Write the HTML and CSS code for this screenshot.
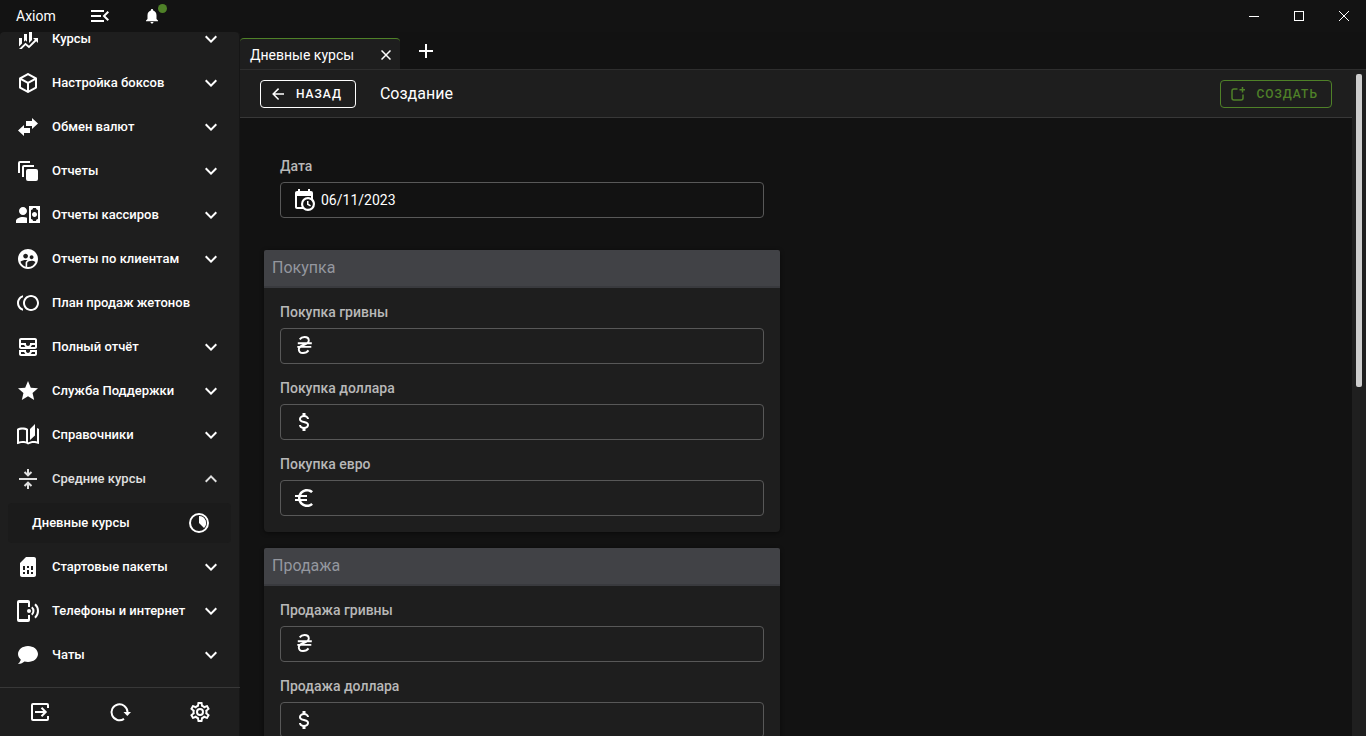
FILE: index.html
```html
<!DOCTYPE html>
<html lang="ru">
<head>
<meta charset="utf-8">
<meta name="viewport" content="width=device-width, initial-scale=1">
<title>Axiom</title>
<link rel="stylesheet" href="styles.css">
</head>
<body>
<svg class="sprite" aria-hidden="true">
  <symbol id="chevron-down" viewBox="0 0 24 24"><path d="M7.41 8.58 12 13.17l4.59-4.59L18 10l-6 6-6-6z"/></symbol>
  <symbol id="chevron-up" viewBox="0 0 24 24"><path d="M7.41 15.41 12 10.83l4.59 4.58L18 14l-6-6-6 6z"/></symbol>
  <symbol id="hryvnia" viewBox="0 0 24 24"><path d="M7.700 5.400C8.900 3.700 10.600 3 12.500 3c2.700 0 4.300 1.300 4.300 3.500 0 5-10 4-10 8.700 0 2.400 1.700 3.800 4.200 3.800 2.200 0 4.300-.8 5.500-2.600M5.300 12.900h14M5.800 9.200h14" fill="none" stroke="currentColor" stroke-width="1.900"/></symbol>
  <symbol id="dollar" viewBox="0 0 24 24"><path d="M7 15h2c0 1.080 1.370 2 3 2s3-.92 3-2c0-1.100-1.040-1.500-3.240-2.030C9.640 12.440 7 11.780 7 9c0-1.790 1.470-3.310 3.500-3.820V3h3v2.180C15.530 5.690 17 7.210 17 9h-2c0-1.080-1.370-2-3-2s-3 .92-3 2c0 1.100 1.040 1.500 3.240 2.030C14.360 11.560 17 12.220 17 15c0 1.790-1.470 3.310-3.500 3.820V21h-3v-2.180C8.470 18.310 7 16.790 7 15z"/></symbol>
  <symbol id="euro" viewBox="0 0 24 24"><path d="M15 18.500c-2.510 0-4.680-1.420-5.760-3.500H15v-2H8.580c-.05-.33-.08-.66-.08-1s.03-.67.08-1H15V9H9.240C10.320 6.920 12.500 5.500 15 5.500c1.610 0 3.090.59 4.230 1.570L21 5.300C19.410 3.870 17.300 3 15 3c-3.920 0-7.240 2.510-8.480 6H3v2h3.060c-.04.33-.06.66-.06 1s.02.67.06 1H3v2h3.520c1.240 3.490 4.560 6 8.480 6 2.310 0 4.410-.87 6-2.300l-1.780-1.770c-1.130.98-2.600 1.570-4.220 1.570z"/></symbol>
</svg>

<div class="app">
  <header class="titlebar">
    <span class="brand">Axiom</span>
    <button class="icon-btn menu-toggle" type="button" aria-label="Свернуть меню">
      <svg class="icon" viewBox="0 0 24 24"><path d="M3 18h13v-2H3v2zm0-5h10v-2H3v2zm0-7v2h13V6H3zm18 9.590L17.420 12 21 8.410 19.590 7l-5 5 5 5L21 15.590z"/></svg>
    </button>
    <button class="icon-btn bell" type="button" aria-label="Уведомления">
      <svg class="icon icon-sm" viewBox="0 0 24 24"><path d="M12 22c1.100 0 2-.9 2-2h-4c0 1.100.9 2 2 2zm6-6v-5c0-3.070-1.630-5.640-4.500-6.320V4c0-.83-.67-1.500-1.500-1.500s-1.500.67-1.500 1.500v.68C7.640 5.360 6 7.920 6 11v5l-2 2v1h16v-1z"/></svg>
      <span class="bell-dot"></span>
    </button>
    <div class="window-controls">
      <button class="icon-btn window-btn" type="button" aria-label="Свернуть"><svg class="win-icon" viewBox="0 0 10 10"><path d="M0 5h10v1H0z"/></svg></button>
      <button class="icon-btn window-btn" type="button" aria-label="Развернуть"><svg class="win-icon" viewBox="0 0 10 10"><path d="M0 0h10v10H0zM1 1v8h8V1z" fill-rule="evenodd"/></svg></button>
      <button class="icon-btn window-btn" type="button" aria-label="Закрыть окно"><svg class="win-icon" viewBox="0 0 10 10"><path d="M0 0l10 10M10 0 0 10" stroke="currentColor"/></svg></button>
    </div>
  </header>

  <div class="workspace">
    <aside class="sidebar">
      <nav class="nav" aria-label="Главное меню">
        <button class="nav-item" type="button">
          <svg class="icon" viewBox="0 0 24 24"><path d="M6 16.500 3 19.440V11h3m5 3.660-1.570-1.340L8 14.640V7h3m5 6-3 3V3h3m2.810 9.810L17 11h5v5l-1.790-1.790L13 21.360l-3.470-3.020L5.750 22H3l6.470-6.340L13 18.640"/></svg>
          <span class="nav-label">Курсы</span><svg class="icon"><use href="#chevron-down"/></svg>
        </button>
        <button class="nav-item" type="button">
          <svg class="icon" viewBox="0 0 24 24"><path d="M21,16.5C21,16.88 20.79,17.21 20.47,17.38L12.57,21.82C12.41,21.94 12.21,22 12,22C11.79,22 11.59,21.94 11.43,21.82L3.53,17.38C3.21,17.21 3,16.88 3,16.5V7.5C3,7.12 3.21,6.79 3.53,6.62L11.43,2.18C11.59,2.06 11.79,2 12,2C12.21,2 12.41,2.06 12.57,2.18L20.47,6.62C20.79,6.79 21,7.12 21,7.5V16.5M12,4.15L6.04,7.5L12,10.85L17.96,7.5L12,4.15M5,15.91L11,19.29V12.58L5,9.21V15.91M19,15.91V9.21L13,12.58V19.29L19,15.91Z"/></svg>
          <span class="nav-label">Настройка боксов</span><svg class="icon"><use href="#chevron-down"/></svg>
        </button>
        <button class="nav-item" type="button">
          <svg class="icon" viewBox="0 0 24 24"><path d="M8,10V13H14V18H8V21L2,15.500L8,10M22,8.500L16,3V6H10V11H16V14L22,8.500Z"/></svg>
          <span class="nav-label">Обмен валют</span><svg class="icon"><use href="#chevron-down"/></svg>
        </button>
        <button class="nav-item" type="button">
          <svg class="icon" viewBox="0 0 24 24"><path d="M4 2a2 2 0 0 0-2 2v10h2V4h10V2zM8 6a2 2 0 0 0-2 2v10h2V8h10V6zM12 10h8a2 2 0 0 1 2 2v8a2 2 0 0 1-2 2h-8a2 2 0 0 1-2-2v-8a2 2 0 0 1 2-2z"/></svg>
          <span class="nav-label">Отчеты</span><svg class="icon"><use href="#chevron-down"/></svg>
        </button>
        <button class="nav-item" type="button">
          <svg class="icon" viewBox="0 0 24 24"><path d="M11 8C11 10.21 9.21 12 7 12C4.79 12 3 10.21 3 8C3 5.79 4.79 4 7 4C9.21 4 11 5.79 11 8M11 14.72V20H0V18C0 15.79 3.13 14 7 14C8.5 14 9.87 14.27 11 14.72M24 20H13V3H24V20M16 11.5C16 10.12 17.12 9 18.5 9C19.88 9 21 10.12 21 11.5C21 12.88 19.88 14 18.5 14C17.12 14 16 12.88 16 11.5M22 7C20.9 7 20 6.11 20 5H17C17 6.11 16.1 7 15 7V16C16.11 16 17 16.9 17 18H20C20 16.9 20.9 16 22 16V7Z"/></svg>
          <span class="nav-label">Отчеты кассиров</span><svg class="icon"><use href="#chevron-down"/></svg>
        </button>
        <button class="nav-item" type="button">
          <svg class="icon" viewBox="0 0 24 24"><path d="M11.99 2c-5.52 0-10 4.48-10 10s4.48 10 10 10 10-4.48 10-10-4.48-10-10-10zm3.61 6.34c1.07 0 1.93.86 1.93 1.93 0 1.07-.86 1.93-1.93 1.93-1.07 0-1.93-.86-1.93-1.93-.01-1.07.86-1.93 1.93-1.93zm-6-1.58c1.3 0 2.36 1.06 2.36 2.36 0 1.3-1.06 2.36-2.36 2.36s-2.36-1.06-2.36-2.36c0-1.31 1.05-2.36 2.36-2.36zm0 9.13v3.75c-2.4-.75-4.3-2.6-5.14-4.96 1.05-1.12 3.67-1.69 5.14-1.69.53 0 1.2.08 1.9.22-1.64.87-1.9 2.02-1.9 2.68zM11.99 20c-.27 0-.53-.01-.79-.04v-4.07c0-1.42 2.94-2.13 4.4-2.13 1.07 0 2.92.39 3.84 1.15-1.17 2.97-4.06 5.09-7.45 5.09z"/></svg>
          <span class="nav-label">Отчеты по клиентам</span><svg class="icon"><use href="#chevron-down"/></svg>
        </button>
        <a class="nav-item" href="#plan">
          <svg class="icon" viewBox="0 0 24 24"><path d="M15 4c-4.420 0-8 3.580-8 8s3.580 8 8 8 8-3.580 8-8-3.580-8-8-8zm0 14c-3.310 0-6-2.690-6-6s2.690-6 6-6 6 2.690 6 6-2.690 6-6 6zM3 12c0-2.610 1.670-4.830 4-5.650V4.260C3.550 5.150 1 8.270 1 12s2.550 6.850 6 7.740v-2.090c-2.330-.82-4-3.040-4-5.650z"/></svg>
          <span class="nav-label">План продаж жетонов</span>
        </a>
        <button class="nav-item" type="button">
          <svg class="icon" viewBox="0 0 24 24"><path d="M19 3H5c-1.1 0-2 .9-2 2v7c0 1.1.9 2 2 2h14c1.1 0 2-.9 2-2V5c0-1.1-.9-2-2-2zM5 10h3.13c.21.78.67 1.47 1.27 2H5v-2zm14 2h-4.4c.6-.53 1.06-1.22 1.27-2H19v2zm0-4h-5v1c0 1.07-.93 2-2 2s-2-.93-2-2V8H5V5h14v3zm-5 7v1c0 .47-.19.9-.48 1.25-.37.45-.92.75-1.52.75s-1.15-.3-1.52-.75c-.29-.35-.48-.78-.48-1.25v-1H3v4c0 1.1.9 2 2 2h14c1.1 0 2-.9 2-2v-4h-7zm-9 2h3.13c.02.09.06.17.09.25.24.68.65 1.28 1.18 1.75H5v-2zm14 2h-4.4c.54-.47.95-1.07 1.18-1.75.03-.08.07-.16.09-.25H19v2z"/></svg>
          <span class="nav-label">Полный отчёт</span><svg class="icon"><use href="#chevron-down"/></svg>
        </button>
        <button class="nav-item" type="button">
          <svg class="icon" viewBox="0 0 24 24"><path d="M12 17.270 18.180 21l-1.640-7.030L22 9.240l-7.190-.61L12 2 9.190 8.630 2 9.240l5.450 4.730L5.820 21z"/></svg>
          <span class="nav-label">Служба Поддержки</span><svg class="icon"><use href="#chevron-down"/></svg>
        </button>
        <button class="nav-item" type="button">
          <svg class="icon" viewBox="0 0 24 24"><path d="M19 1L14 6V17L19 12.5V1M21 5V18.5C19.9 18.15 18.7 18 17.5 18C15.8 18 13.35 18.65 12 19.5V6C10.55 4.9 8.45 4.5 6.5 4.5C4.55 4.5 2.45 4.9 1 6V20.65C1 20.9 1.25 21.15 1.5 21.15C1.6 21.15 1.65 21.1 1.75 21.1C3.1 20.45 5.05 20 6.5 20C8.45 20 10.55 20.4 12 21.5C13.35 20.65 15.8 20 17.5 20C19.15 20 20.85 20.3 22.25 21.05C22.35 21.1 22.4 21.1 22.5 21.1C22.75 21.1 23 20.85 23 20.6V6C22.4 5.55 21.75 5.25 21 5M10 18.41C8.75 18.09 7.5 18 6.5 18C5.44 18 4.18 18.19 3 18.5V7.13C3.91 6.73 5.14 6.5 6.5 6.5C7.86 6.5 9.09 6.73 10 7.13V18.41Z"/></svg>
          <span class="nav-label">Справочники</span><svg class="icon"><use href="#chevron-down"/></svg>
        </button>
        <button class="nav-item nav-item-open" type="button" aria-expanded="true">
          <svg class="icon" viewBox="0 0 24 24"><path d="M3 12h18M12 2v6M8.500 5 12 8.300 15.500 5M12 22v-6M8.500 19l3.500-3.300 3.500 3.300" fill="none" stroke="currentColor" stroke-width="2"/></svg>
          <span class="nav-label">Средние курсы</span><svg class="icon"><use href="#chevron-up"/></svg>
        </button>
        <a class="nav-item nav-sub" href="#daily" aria-current="page">
          <span class="nav-label">Дневные курсы</span>
          <svg class="icon" viewBox="0 0 24 24"><circle cx="12" cy="12" r="9" fill="none" stroke="currentColor" stroke-width="2"/><path d="M12 5v7l5 5a7 7 0 0 0-5-12z"/></svg>
        </a>
        <button class="nav-item" type="button">
          <svg class="icon" viewBox="0 0 24 24"><path d="M19.990 4c0-1.100-.89-2-1.990-2h-8L4 8v12c0 1.100.9 2 2 2h12.010c1.100 0 1.990-.9 1.990-2l-.01-16zM9 19H7v-2h2v2zm8 0h-2v-2h2v2zm-8-4H7v-4h2v4zm4 4h-2v-4h2v4zm0-6h-2v-2h2v2zm4 2h-2v-4h2v4z"/></svg>
          <span class="nav-label">Стартовые пакеты</span><svg class="icon"><use href="#chevron-down"/></svg>
        </button>
        <button class="nav-item" type="button">
          <svg class="icon" viewBox="0 0 24 24"><path d="M3 1h9a2 2 0 0 1 2 2v5h-2V4H3v16h9v-4h2v5a2 2 0 0 1-2 2H3a2 2 0 0 1-2-2V3a2 2 0 0 1 2-2z"/><circle cx="13" cy="12" r="2"/><path d="M15.800 8.300a5 5 0 0 1 0 7.400M19 5.300a9 9 0 0 1 0 13.400" fill="none" stroke="currentColor" stroke-width="2"/></svg>
          <span class="nav-label">Телефоны и интернет</span><svg class="icon"><use href="#chevron-down"/></svg>
        </button>
        <button class="nav-item" type="button">
          <svg class="icon" viewBox="0 0 24 24"><path d="M12,3C17.5,3 22,6.58 22,11C22,15.42 17.5,19 12,19C10.76,19 9.57,18.82 8.47,18.5C5.55,21 2,21 2,21C4.33,18.67 4.7,17.1 4.75,16.5C3.05,15.07 2,13.13 2,11C2,6.58 6.5,3 12,3Z"/></svg>
          <span class="nav-label">Чаты</span><svg class="icon"><use href="#chevron-down"/></svg>
        </button>
      </nav>
      <div class="sidebar-footer">
        <button class="icon-btn" type="button" aria-label="Выйти"><svg class="icon" viewBox="0 0 24 24"><path d="M20 8V5a1 1 0 0 0-1-1H5a1 1 0 0 0-1 1v14a1 1 0 0 0 1 1h14a1 1 0 0 0 1-1v-3M7 12h10.500M13.500 7.800 17.700 12l-4.200 4.200" fill="none" stroke="currentColor" stroke-width="2"/></svg></button>
        <button class="icon-btn" type="button" aria-label="Обновить"><svg class="icon" viewBox="0 0 24 24"><path d="M16 18.900A8 8 0 1 1 19.500 12" fill="none" stroke="currentColor" stroke-width="2"/><path d="M15.500 12h7.500l-3.700 4z"/></svg></button>
        <button class="icon-btn" type="button" aria-label="Настройки"><svg class="icon" viewBox="0 0 24 24"><path d="M12,8A4,4 0 0,1 16,12A4,4 0 0,1 12,16A4,4 0 0,1 8,12A4,4 0 0,1 12,8M12,10A2,2 0 0,0 10,12A2,2 0 0,0 12,14A2,2 0 0,0 14,12A2,2 0 0,0 12,10M10,22C9.75,22 9.54,21.82 9.5,21.58L9.13,18.93C8.5,18.68 7.96,18.34 7.44,17.94L4.95,18.95C4.73,19.03 4.46,18.95 4.34,18.73L2.34,15.27C2.21,15.05 2.27,14.78 2.46,14.63L4.57,12.97L4.5,12L4.57,11L2.46,9.37C2.27,9.22 2.21,8.95 2.34,8.73L4.34,5.27C4.46,5.05 4.73,4.96 4.95,5.05L7.44,6.05C7.96,5.66 8.5,5.32 9.13,5.07L9.5,2.42C9.54,2.18 9.75,2 10,2H14C14.25,2 14.46,2.18 14.5,2.42L14.87,5.07C15.5,5.32 16.04,5.66 16.56,6.05L19.05,5.05C19.27,4.96 19.54,5.05 19.66,5.27L21.66,8.73C21.79,8.95 21.73,9.22 21.54,9.37L19.43,11L19.5,12L19.43,13L21.54,14.63C21.73,14.78 21.79,15.05 21.66,15.27L19.66,18.73C19.54,18.95 19.27,19.04 19.05,18.95L16.56,17.95C16.04,18.34 15.5,18.68 14.87,18.93L14.5,21.58C14.46,21.82 14.25,22 14,22H10M11.25,4L10.88,6.61C9.68,6.86 8.62,7.5 7.85,8.39L5.44,7.35L4.69,8.65L6.8,10.2C6.4,11.37 6.4,12.64 6.8,13.8L4.68,15.36L5.43,16.66L7.86,15.62C8.63,16.5 9.68,17.14 10.87,17.38L11.24,20H12.76L13.13,17.39C14.32,17.14 15.37,16.5 16.14,15.62L18.57,16.66L19.32,15.36L17.2,13.81C17.6,12.64 17.6,11.37 17.2,10.2L19.31,8.65L18.56,7.35L16.15,8.39C15.38,7.5 14.32,6.86 13.12,6.62L12.75,4H11.25Z"/></svg></button>
      </div>
    </aside>

    <main class="main">
      <div class="tabs">
        <div class="tab">
          <a class="tab-title" href="#daily">Дневные курсы</a>
          <button class="icon-btn tab-close" type="button" aria-label="Закрыть вкладку"><svg class="win-icon" viewBox="0 0 10 10"><path d="M.5.5l9 9M9.500.5l-9 9" stroke="currentColor" stroke-width="1.500"/></svg></button>
        </div>
        <button class="icon-btn tab-add" type="button" aria-label="Новая вкладка"><svg class="icon-add" viewBox="0 0 14 14"><path d="M6 0h2v6h6v2H8v6H6V8H0V6h6z"/></svg></button>
      </div>
      <div class="view">
        <div class="page">
          <div class="toolbar">
            <button class="btn" type="button"><svg class="icon icon-sm" viewBox="0 0 24 24"><path d="M20 11v2H8l5.500 5.500-1.420 1.420L4.160 12l7.920-7.920L13.500 5.500 8 11z"/></svg>НАЗАД</button>
            <h1 class="page-title">Создание</h1>
            <button class="btn btn-create" type="button"><svg class="icon icon-sm" viewBox="0 0 18 18"><path d="M8.500 4H5a2 2 0 0 0-2 2v7a2 2 0 0 0 2 2h7a2 2 0 0 0 2-2V9.500M13.500 2v5.500M10.500 4.750h5.500" fill="none" stroke="currentColor" stroke-width="1.500"/></svg>СОЗДАТЬ</button>
          </div>
          <form class="form">
            <div class="field field-date">
              <label for="date">Дата</label>
              <div class="control"><svg class="icon" viewBox="0 0 24 24"><path d="M15,13H16.5V15.82L18.94,17.23L18.19,18.53L15,16.69V13M19,8H5V19H9.67C9.24,18.09 9,17.07 9,16A7,7 0 0,1 16,9C17.07,9 18.09,9.24 19,9.67V8M5,21C3.89,21 3,20.1 3,19V5C3,3.89 3.89,3 5,3H6V1H8V3H16V1H18V3H19A2,2 0 0,1 21,5V11.1C22.24,12.36 23,14.09 23,16A7,7 0 0,1 16,23C14.09,23 12.36,22.24 11.1,21H5M16,11.15A4.85,4.85 0 0,0 11.15,16C11.15,18.68 13.32,20.85 16,20.85A4.85,4.85 0 0,0 20.85,16C20.85,13.32 18.68,11.15 16,11.15Z"/></svg><input id="date" type="text" value="06/11/2023"></div>
            </div>
            <section class="card">
              <h2 class="card-title">Покупка</h2>
              <div class="card-body">
                <div class="field"><label for="buy-uah">Покупка гривны</label><div class="control"><svg class="icon"><use href="#hryvnia"/></svg><input id="buy-uah" type="text"></div></div>
                <div class="field"><label for="buy-usd">Покупка доллара</label><div class="control"><svg class="icon"><use href="#dollar"/></svg><input id="buy-usd" type="text"></div></div>
                <div class="field"><label for="buy-eur">Покупка евро</label><div class="control"><svg class="icon"><use href="#euro"/></svg><input id="buy-eur" type="text"></div></div>
              </div>
            </section>
            <section class="card">
              <h2 class="card-title">Продажа</h2>
              <div class="card-body">
                <div class="field"><label for="sell-uah">Продажа гривны</label><div class="control"><svg class="icon"><use href="#hryvnia"/></svg><input id="sell-uah" type="text"></div></div>
                <div class="field"><label for="sell-usd">Продажа доллара</label><div class="control"><svg class="icon"><use href="#dollar"/></svg><input id="sell-usd" type="text"></div></div>
              </div>
            </section>
          </form>
        </div>
        <div class="scrollbar" aria-hidden="true"><div class="scrollbar-thumb"></div></div>
      </div>
    </main>
  </div>
</div>
</body>
</html>
```

FILE: styles.css
```css
* {
  box-sizing: border-box;
}

body {
  margin: 0;
  background: #121212;
  color: #fff;
  font-family: Roboto, "Liberation Sans", sans-serif;
  font-size: 14px;
}

button,
input {
  font: inherit;
  color: inherit;
}

a {
  color: inherit;
  text-decoration: none;
}

.sprite {
  display: none;
}

.icon {
  flex: none;
  width: 24px;
  height: 24px;
  fill: currentColor;
}

.icon-sm {
  width: 18px;
  height: 18px;
}

.win-icon {
  width: 10px;
  height: 10px;
  fill: currentColor;
}

.icon-btn {
  display: flex;
  align-items: center;
  justify-content: center;
  padding: 0;
  border: 0;
  background: none;
}

.app {
  display: flex;
  flex-direction: column;
  height: 100vh;
  overflow: hidden;
}

/* Title bar */

.titlebar {
  display: flex;
  flex: none;
  height: 32px;
  padding-left: 16px;
  background: #131313;
}

.brand {
  line-height: 32px;
}

.menu-toggle {
  width: 40px;
  margin-left: 24px;
}

.bell {
  position: relative;
  width: 32px;
  margin-left: 16px;
}

.bell-dot {
  position: absolute;
  top: 4px;
  right: 1px;
  width: 9px;
  height: 9px;
  border-radius: 50%;
  background: #4f8128;
}

.window-controls {
  display: flex;
  margin-left: auto;
}

.window-btn {
  width: 45px;
}

.workspace {
  display: flex;
  flex: 1;
  min-height: 0;
}

/* Sidebar */

.sidebar {
  display: flex;
  flex: none;
  flex-direction: column;
  width: 240px;
  border-radius: 4px 4px 0 0;
  background: #1e1e1e;
  box-shadow: inset -1px 0 #161616;
}

.nav {
  display: flex;
  flex: 1;
  flex-direction: column;
  justify-content: flex-end;
  gap: 4px;
  min-height: 0;
  padding: 0 9px 12px 8px;
  overflow: hidden;
}

.nav-item {
  display: flex;
  flex: none;
  align-items: center;
  gap: 12px;
  height: 40px;
  padding: 0 8px;
  border: 0;
  border-radius: 4px;
  background: none;
  font-size: 13px;
  font-weight: 500;
  text-align: left;
  white-space: nowrap;
}

.nav-label {
  flex: 1;
  line-height: 16px;
}

.nav-item-open {
  color: #e0e0e0;
}

.nav-sub {
  padding: 0 20px 0 24px;
  background: #1b1b1b;
}

.sidebar-footer {
  display: grid;
  flex: none;
  grid-template-columns: repeat(3, 1fr);
  height: 49px;
  border-top: 1px solid #383838;
}

/* Tabs */

.main {
  display: flex;
  flex: 1;
  flex-direction: column;
  min-width: 0;
}

.tabs {
  display: flex;
  flex: none;
  height: 38px;
  padding-top: 6px;
  border-bottom: 1px solid #2e2e2e;
}

.tab {
  display: flex;
  align-items: center;
  justify-content: space-between;
  width: 160px;
  padding: 2px 4px 0 10px;
  border-top: 1px solid #4f8128;
  border-radius: 4px 4px 0 0;
  background: #1e1e1e;
}

.tab-close {
  width: 20px;
  height: 20px;
}

.tab-add {
  width: 52px;
  padding-bottom: 6px;
}

.icon-add {
  width: 14px;
  height: 14px;
  fill: currentColor;
}

.view {
  display: flex;
  flex: 1;
  min-height: 0;
}

.page {
  flex: 1;
  min-width: 0;
  overflow: hidden;
}

.toolbar {
  display: flex;
  align-items: center;
  height: 48px;
  padding: 0 20px;
  border-bottom: 1px solid #383838;
  background: #1e1e1e;
}

.page-title {
  margin: 0 0 0 24px;
  font-size: 16px;
  font-weight: 400;
}

.btn {
  display: flex;
  align-items: center;
  gap: 9px;
  height: 28px;
  padding: 0 13px 0 8px;
  border: 1px solid #fff;
  border-radius: 4px;
  background: none;
  font-size: 12px;
  font-weight: 500;
  letter-spacing: 1px;
}

.btn-create {
  margin-left: auto;
  border-color: #4f8128;
  color: #4f8128;
}

/* Form */

.form {
  display: flex;
  flex-direction: column;
  gap: 16px;
  max-width: 564px;
  padding: 40px 24px;
}

.field {
  display: flex;
  flex-direction: column;
  gap: 8px;
}

.field-date {
  padding: 0 16px 16px;
}

.field label {
  color: #b8b8b8;
  font-weight: 500;
  line-height: 16px;
}

.control {
  display: flex;
  align-items: center;
  gap: 5px;
  height: 36px;
  padding: 0 11px;
  border: 1px solid #585858;
  border-radius: 4px;
}

.control input {
  flex: 1;
  min-width: 0;
  padding: 0;
  border: 0;
  outline: 0;
  background: none;
}

.card {
  border-radius: 4px;
  background: #1e1e1e;
  box-shadow: 0 1px 4px rgba(0, 0, 0, 0.5);
}

.card-title {
  height: 38px;
  margin: 0;
  padding: 0 8px;
  border-bottom: 2px solid #393a3e;
  border-radius: 2px 2px 0 0;
  background: #414246;
  color: #94979f;
  font-size: 16px;
  font-weight: 400;
  line-height: 36px;
}

.card-body {
  display: flex;
  flex-direction: column;
  gap: 16px;
  padding: 16px;
}

/* Scroll indicator */

.scrollbar {
  flex: none;
  width: 14px;
  padding: 4px;
  background: #1f1f1f;
}

.scrollbar-thumb {
  height: 47.6%;
  border-radius: 2px;
  background: #cdcdcd;
}
```
